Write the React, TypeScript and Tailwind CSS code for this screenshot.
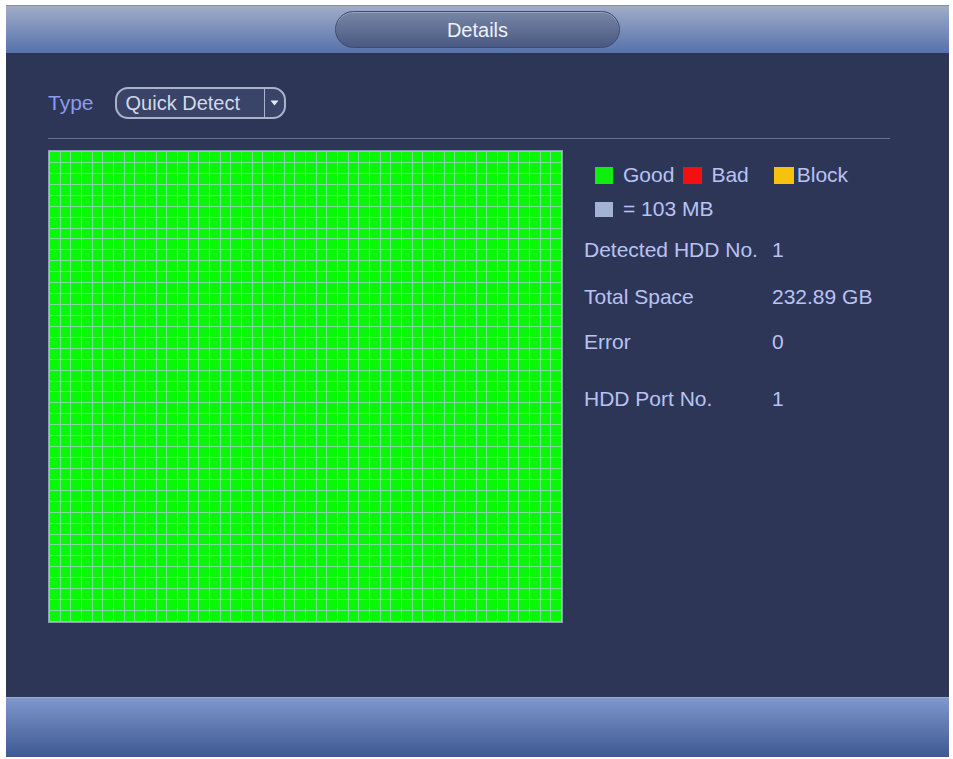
import React from "react";

const COLS = 48;
const ROWS = 43;

function DiskGrid() {
  const cells = Array.from({ length: COLS * ROWS });
  return (
    <div className="w-[515px] h-[473px] border border-[#8f9bb8] bg-[#7fd99a] p-px">
      <div className="grid h-full w-full grid-cols-[repeat(48,1fr)] grid-rows-[repeat(43,1fr)] gap-px">
        {cells.map((_, i) => (
          <div key={i} className="bg-[#08f808]" />
        ))}
      </div>
    </div>
  );
}

export default function App() {
  return (
    <div
      className="w-[953px] h-[759px] bg-white pt-[5px] pl-[6px]"
      style={{ fontFamily: '"Liberation Sans", Arial, sans-serif' }}
    >
      <div className="flex h-[752px] w-[943px] flex-col bg-[#2e3658]">
        {/* Header */}
        <div className="flex h-[48px] items-center justify-center border-t border-[#8a8f9c] bg-gradient-to-b from-[#a1adc8] via-[#7a8fbb] to-[#5672ab]">
          <div className="flex h-[37px] w-[285px] items-center justify-center rounded-full border border-[#3f4b6e] bg-gradient-to-b from-[#7886a5] to-[#4a5982] shadow-[inset_0_1px_0_rgba(255,255,255,0.25)]">
            <span className="text-[20px] text-[#eef1f8]">Details</span>
          </div>
        </div>

        {/* Body */}
        <div className="flex-1 pl-[42px] pt-[34px]">
          <div className="flex h-[32px] items-center">
            <span className="text-[21px] text-[#8b9ce9]">Type</span>
            <div className="ml-[21px] flex h-[32px] w-[171px] items-center rounded-[13px] border-2 border-[#aab3cc] bg-[#3a4468]">
              <span className="flex-1 pl-[9px] text-[20px] text-[#d3d9ea]">Quick Detect</span>
              <div className="flex h-full w-[20px] items-center justify-center border-l border-[#aab3cc]">
                <svg width="9" height="6" viewBox="0 0 9 6">
                  <path d="M0.5 0.5 L8.5 0.5 L4.5 5.5 Z" fill="#e6eaf4" />
                </svg>
              </div>
            </div>
          </div>

          <div className="mt-[19px] h-px w-[842px] bg-[#69718f]" />

          <div className="mt-[11px] flex">
            <DiskGrid />

            <div className="ml-[21px] flex flex-col pt-[8px] text-[21px] text-[#b9c2f2]">
              <div className="flex h-[34px] items-center pl-[11px]">
                <span className="h-[17px] w-[18px] bg-[#10ee10]" />
                <span className="ml-[10px]">Good</span>
                <span className="ml-[9px] h-[17px] w-[19px] bg-[#f41010]" />
                <span className="ml-[9px]">Bad</span>
                <span className="ml-[25px] h-[17px] w-[20px] bg-[#f7c20e]" />
                <span className="ml-[3px]">Block</span>
              </div>
              <div className="flex h-[34px] items-center pl-[11px]">
                <span className="h-[15px] w-[18px] bg-[#a3b3d6]" />
                <span className="ml-[10px]">= 103 MB</span>
              </div>
              <div className="mt-[7px] flex h-[34px] items-center">
                <span className="w-[188px]">Detected HDD No.</span>
                <span>1</span>
              </div>
              <div className="mt-[13px] flex h-[34px] items-center">
                <span className="w-[188px]">Total Space</span>
                <span>232.89 GB</span>
              </div>
              <div className="mt-[11px] flex h-[34px] items-center">
                <span className="w-[188px]">Error</span>
                <span>0</span>
              </div>
              <div className="mt-[23px] flex h-[34px] items-center">
                <span className="w-[188px]">HDD Port No.</span>
                <span>1</span>
              </div>
            </div>
          </div>
        </div>

        {/* Footer */}
        <div className="h-[60px] border-t border-[#9aaad4] bg-gradient-to-b from-[#7f98cc] to-[#3e5892]" />
      </div>
    </div>
  );
}
